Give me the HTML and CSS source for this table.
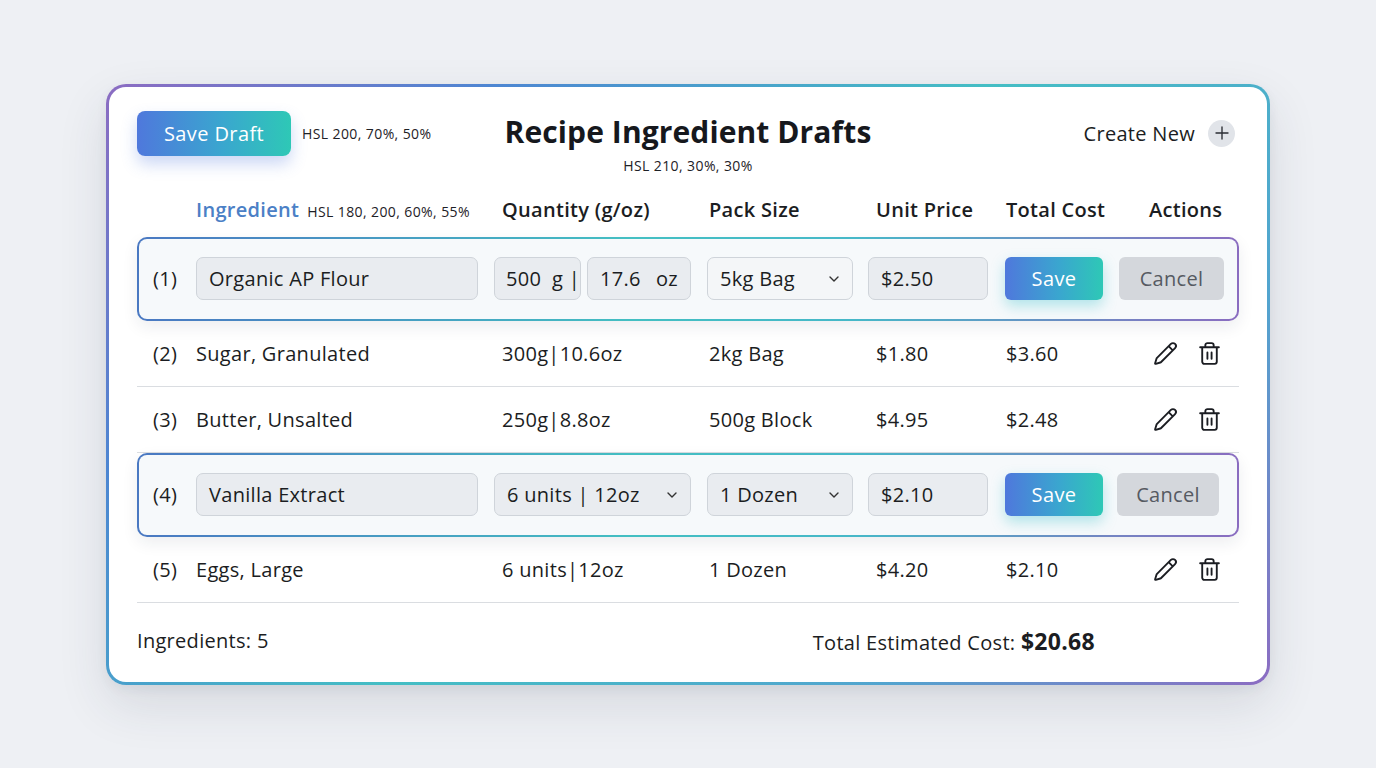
FILE: index.html
```html
<!DOCTYPE html>
<html lang="en">
<head>
<meta charset="utf-8">
<title>Recipe Ingredient Drafts</title>
<link rel="stylesheet" href="styles.css">
</head>
<body>
<div class="page">
  <section class="card">
    <header class="top">
      <div class="top-left">
        <button class="btn-grad btn-draft">Save Draft</button>
        <span class="note">HSL 200, 70%, 50%</span>
      </div>
      <div class="top-center">
        <h1 class="title">Recipe Ingredient Drafts</h1>
        <div class="note">HSL 210, 30%, 30%</div>
      </div>
      <div class="top-right">
        <span class="create">Create New</span>
        <span class="plus">
          <svg viewBox="0 0 24 24" width="18" height="18"><path d="M12 4v16M4 12h16" stroke="#2a2d33" stroke-width="1.8" stroke-linecap="round" fill="none"/></svg>
        </span>
      </div>
    </header>

    <div class="grid colhead">
      <div></div>
      <div class="c-ing"><span class="ing-head">Ingredient</span><span class="note">HSL 180, 200, 60%, 55%</span></div>
      <div class="c-qty">Quantity (g/oz)</div>
      <div class="c-pack">Pack Size</div>
      <div class="c-price">Unit Price</div>
      <div class="c-total">Total Cost</div>
      <div class="c-act">Actions</div>
    </div>

    <div class="rows">
      <div class="grid row edit">
        <div class="idx">(1)</div>
        <div><div class="field ing-field">Organic AP Flour</div></div>
        <div class="qty-pair">
          <div class="field q1"><span>500</span><span>g |</span></div>
          <div class="field q2"><span>17.6</span><span>oz</span></div>
        </div>
        <div><div class="field select light">5kg Bag<svg class="chev" viewBox="0 0 12 12" width="12" height="12"><path d="M2 4l4 4 4-4" fill="none" stroke="#333" stroke-width="1.4" stroke-linecap="round" stroke-linejoin="round"/></svg></div></div>
        <div><div class="field price-field">$2.50</div></div>
        <div><button class="btn-grad btn-save">Save</button></div>
        <div><button class="btn-cancel">Cancel</button></div>
      </div>

      <div class="grid row">
        <div class="idx">(2)</div>
        <div class="c-ing">Sugar, Granulated</div>
        <div class="c-qty">300g|10.6oz</div>
        <div class="c-pack">2kg Bag</div>
        <div class="c-price">$1.80</div>
        <div class="c-total">$3.60</div>
        <div class="icons">
          <svg viewBox="0 0 24 24" width="25" height="25"><path d="M21.174 6.812a1 1 0 0 0-3.986-3.987L3.842 16.174a2 2 0 0 0-.5.83l-1.321 4.352a.5.5 0 0 0 .623.622l4.353-1.32a2 2 0 0 0 .83-.497z M15 5l4 4" fill="none" stroke="#1b1d22" stroke-width="1.8" stroke-linecap="round" stroke-linejoin="round"/></svg>
          <svg viewBox="0 0 24 24" width="25" height="25"><path d="M3 6h18 M19 6v14c0 1-1 2-2 2H7c-1 0-2-1-2-2V6 M8 6V4c0-1 1-2 2-2h4c1 0 2 1 2 2v2 M10 11v6 M14 11v6" fill="none" stroke="#1b1d22" stroke-width="1.8" stroke-linecap="round" stroke-linejoin="round"/></svg>
        </div>
      </div>

      <div class="grid row">
        <div class="idx">(3)</div>
        <div class="c-ing">Butter, Unsalted</div>
        <div class="c-qty">250g|8.8oz</div>
        <div class="c-pack">500g Block</div>
        <div class="c-price">$4.95</div>
        <div class="c-total">$2.48</div>
        <div class="icons">
          <svg viewBox="0 0 24 24" width="25" height="25"><path d="M21.174 6.812a1 1 0 0 0-3.986-3.987L3.842 16.174a2 2 0 0 0-.5.83l-1.321 4.352a.5.5 0 0 0 .623.622l4.353-1.32a2 2 0 0 0 .83-.497z M15 5l4 4" fill="none" stroke="#1b1d22" stroke-width="1.8" stroke-linecap="round" stroke-linejoin="round"/></svg>
          <svg viewBox="0 0 24 24" width="25" height="25"><path d="M3 6h18 M19 6v14c0 1-1 2-2 2H7c-1 0-2-1-2-2V6 M8 6V4c0-1 1-2 2-2h4c1 0 2 1 2 2v2 M10 11v6 M14 11v6" fill="none" stroke="#1b1d22" stroke-width="1.8" stroke-linecap="round" stroke-linejoin="round"/></svg>
        </div>
      </div>

      <div class="grid row edit">
        <div class="idx">(4)</div>
        <div><div class="field ing-field">Vanilla Extract</div></div>
        <div><div class="field select qty-select">6 units | 12oz<svg class="chev" viewBox="0 0 12 12" width="12" height="12"><path d="M2 4l4 4 4-4" fill="none" stroke="#333" stroke-width="1.4" stroke-linecap="round" stroke-linejoin="round"/></svg></div></div>
        <div><div class="field select">1 Dozen<svg class="chev" viewBox="0 0 12 12" width="12" height="12"><path d="M2 4l4 4 4-4" fill="none" stroke="#333" stroke-width="1.4" stroke-linecap="round" stroke-linejoin="round"/></svg></div></div>
        <div><div class="field price-field">$2.10</div></div>
        <div><button class="btn-grad btn-save">Save</button></div>
        <div><button class="btn-cancel cancel-4">Cancel</button></div>
      </div>

      <div class="grid row">
        <div class="idx">(5)</div>
        <div class="c-ing">Eggs, Large</div>
        <div class="c-qty">6 units|12oz</div>
        <div class="c-pack">1 Dozen</div>
        <div class="c-price">$4.20</div>
        <div class="c-total">$2.10</div>
        <div class="icons">
          <svg viewBox="0 0 24 24" width="25" height="25"><path d="M21.174 6.812a1 1 0 0 0-3.986-3.987L3.842 16.174a2 2 0 0 0-.5.83l-1.321 4.352a.5.5 0 0 0 .623.622l4.353-1.32a2 2 0 0 0 .83-.497z M15 5l4 4" fill="none" stroke="#1b1d22" stroke-width="1.8" stroke-linecap="round" stroke-linejoin="round"/></svg>
          <svg viewBox="0 0 24 24" width="25" height="25"><path d="M3 6h18 M19 6v14c0 1-1 2-2 2H7c-1 0-2-1-2-2V6 M8 6V4c0-1 1-2 2-2h4c1 0 2 1 2 2v2 M10 11v6 M14 11v6" fill="none" stroke="#1b1d22" stroke-width="1.8" stroke-linecap="round" stroke-linejoin="round"/></svg>
        </div>
      </div>
    </div>

    <footer class="foot">
      <span>Ingredients: 5</span>
      <span class="total">Total Estimated Cost: <strong>$20.68</strong></span>
    </footer>
  </section>
</div>
</body>
</html>
```

FILE: styles.css
```css
* { box-sizing: border-box; }
html, body { margin: 0; padding: 0; }
body {
  background: #eef0f4;
  font-family: "Open Sans", "Noto Sans", sans-serif;
  color: #1b1d22;
  letter-spacing: 0.3px;
}
.page {
  width: 1376px;
  height: 768px;
  display: flex;
  align-items: center;
  justify-content: center;
}
.card {
  width: 1164px;
  border: 3px solid transparent;
  border-radius: 20px;
  background:
    linear-gradient(#ffffff, #ffffff) padding-box,
    linear-gradient(135deg, #8c6cc2 0%, #4d86d2 22%, #44bec4 50%, #52a4cf 78%, #8c6cc2 100%) border-box;
  box-shadow: 0 20px 50px rgba(40, 50, 70, 0.12), 0 4px 12px rgba(40, 50, 70, 0.06);
  padding: 24px 28px 3px 28px;
}
.top {
  display: grid;
  grid-template-columns: 1fr auto 1fr;
  height: 62px;
}
.top-left {
  display: flex;
  align-items: center;
  gap: 11px;
  height: 45px;
}
.note {
  font-size: 14px;
  letter-spacing: 0.4px;
  color: #1e2126;
  font-weight: 500;
}
.btn-grad {
  border: none;
  color: #fff;
  font-family: inherit;
  font-weight: 500;
  letter-spacing: 0.4px;
  background: linear-gradient(90deg, #4f78dc 0%, #3aa6cf 55%, #2ec8b6 100%);
  cursor: pointer;
}
.btn-draft {
  width: 154px;
  height: 45px;
  border-radius: 8px;
  font-size: 20px;
  box-shadow: 0 8px 16px rgba(70, 110, 220, 0.28);
}
.top-center {
  text-align: center;
  padding-top: 3px;
}
.title {
  margin: 0;
  font-size: 30px;
  line-height: 36px;
  font-weight: 700;
  letter-spacing: 0.1px;
  color: #16181d;
}
.top-center .note {
  margin-top: 8px;
  line-height: 16px;
}
.top-right {
  display: flex;
  justify-content: flex-end;
  align-items: center;
  gap: 13px;
  height: 45px;
  padding-right: 4px;
}
.create {
  font-size: 20px;
  color: #1b1d22;
}
.plus {
  width: 27px;
  height: 27px;
  border-radius: 50%;
  background: #e1e4e9;
  display: flex;
  align-items: center;
  justify-content: center;
}
.grid {
  display: grid;
  grid-template-columns: 43px 298px 213px 161px 137px 114px 1fr;
  align-items: center;
  padding-left: 16px;
}
.colhead {
  margin-top: 17px;
  height: 40px;
  font-size: 20px;
  font-weight: 600;
  color: #1b1d22;
}
.ing-head {
  color: #4b80c6;
  font-size: 20px;
  margin-right: 8px;
}
.colhead .note { font-weight: 500; }
.c-qty { padding-left: 8px; }
.c-pack { padding-left: 2px; }
.c-price { padding-left: 8px; }
.c-total { padding-left: 1px; }
.c-act { padding-left: 30px; }
.rows {
  margin-top: 7px;
}
.row {
  height: 66px;
  font-size: 20px;
  border-bottom: 1px solid #dadde1;
}
.idx { font-size: 20px; }
.row.edit {
  height: 84px;
  border: 2px solid transparent;
  border-radius: 10px;
  padding-left: 14px;
  background:
    linear-gradient(#f6f9fb, #f6f9fb) padding-box,
    linear-gradient(90deg, #4a78c2 0%, #43bfc2 45%, #46b8c8 65%, #8a6cc0 100%) border-box;
  box-shadow: 0 6px 16px rgba(30, 40, 60, 0.08);
}
.field {
  height: 43px;
  border-radius: 7px;
  border: 1px solid #cfd4da;
  background: #e9ecf0;
  display: flex;
  align-items: center;
  padding: 0 12px;
  font-size: 20px;
  color: #1b1d22;
}
.ing-field { width: 282px; }
.qty-pair {
  display: flex;
  gap: 6px;
}
.q1 {
  width: 87px;
  justify-content: space-between;
  padding-left: 11px;
  padding-right: 0;
}
.q2 {
  width: 104px;
  justify-content: space-between;
}
.select {
  width: 146px;
  justify-content: space-between;
}
.select.light { background: #f4f6f8; }
.qty-select { width: 197px; }
.price-field { width: 120px; }
.chev { flex: none; }
.btn-save {
  width: 98px;
  height: 43px;
  border-radius: 6px;
  font-size: 20px;
  box-shadow: 0 6px 14px rgba(50, 190, 200, 0.35);
}
.btn-cancel {
  width: 105px;
  height: 43px;
  border: none;
  border-radius: 6px;
  background: #d4d7dc;
  color: #565a62;
  font-family: inherit;
  font-size: 20px;
  letter-spacing: 0.3px;
}
.cancel-4 {
  width: 102px;
  margin-left: -2px;
}
.icons {
  display: flex;
  gap: 19px;
  padding-left: 34px;
  align-items: center;
}
.foot {
  height: 76px;
  display: flex;
  align-items: center;
  justify-content: space-between;
  font-size: 20px;
  padding-right: 144px;
}
.total strong {
  font-size: 23px;
  font-weight: 700;
}
```
